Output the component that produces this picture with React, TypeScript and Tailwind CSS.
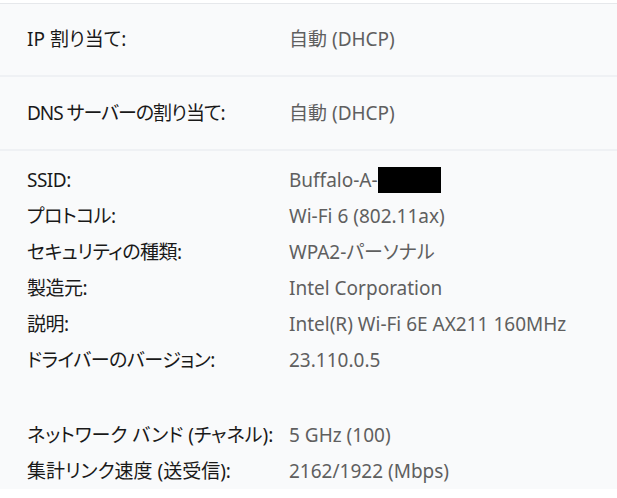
export default function App(){

 const details: [string, React.ReactNode][] = [
  ["SSID:", <span className="flex items-center">Buffalo-A-<span className="inline-block w-[63px] h-[26px] bg-black"/></span>],
  ["プロトコル:", "Wi-Fi 6 (802.11ax)"],
  ["セキュリティの種類:", "WPA2-パーソナル"],
  ["製造元:", "Intel Corporation"],
  ["説明:", "Intel(R) Wi-Fi 6E AX211 160MHz"],
  ["ドライバーのバージョン:", "23.110.0.5"],
 ]

 const band: [string, string][] = [
  ["ネットワーク バンド (チャネル):", "5 GHz (100)"],
  ["集計リンク速度 (送受信):", "2162/1922 (Mbps)"],
 ]

 return(

  <div className="w-[617px] h-[498px] overflow-hidden bg-white font-['Noto_Sans','Noto_Sans_CJK_JP',sans-serif] [font-feature-settings:'palt'] text-[19px]">

   <div className="h-[3px] bg-white"/>

   <div className="border-t border-[#e6e8eb] bg-[#f9fafb]">

    {/* Assignment rows */}

    <div className="h-[73px] grid grid-cols-[262px_1fr] items-center pl-[27px] border-b-2 border-[#eff1f4]">
     <span className="text-[#191919]">IP 割り当て:</span>
     <span className="text-[#5f5f5f]">自動 (DHCP)</span>
    </div>

    <div className="h-[74px] grid grid-cols-[262px_1fr] items-center pl-[27px] border-b-2 border-[#eff1f4]">
     <span className="text-[#191919] tracking-[-1px]">DNS サーバーの割り当て:</span>
     <span className="text-[#5f5f5f]">自動 (DHCP)</span>
    </div>

    {/* Adapter details */}

    <div className="pt-[11px] pl-[27px] leading-[36px]">

     {details.map(([label,value])=>(
      <div key={label} className="grid grid-cols-[262px_1fr] items-center h-[36px]">
       <span className="text-[#191919] tracking-[-0.5px]">{label}</span>
       <span className="text-[#5f5f5f]">{value}</span>
      </div>
     ))}

     <div className="h-[39px]"/>

     {band.map(([label,value])=>(
      <div key={label} className="grid grid-cols-[262px_1fr] items-center h-[36px]">
       <span className="text-[#191919]">{label}</span>
       <span className="text-[#5f5f5f]">{value}</span>
      </div>
     ))}

    </div>

   </div>

  </div>

 )

}
